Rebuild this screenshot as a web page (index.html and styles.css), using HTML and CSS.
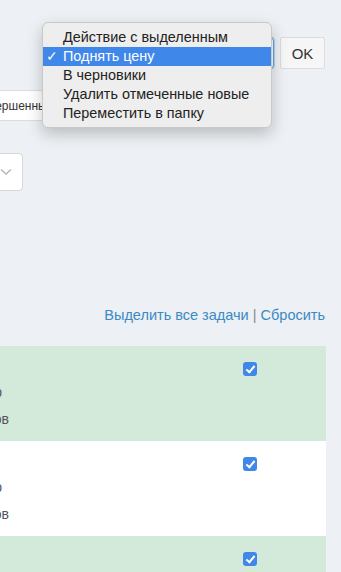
FILE: index.html
```html
<!DOCTYPE html>
<html lang="ru">
<head>
  <meta charset="UTF-8" />
  <meta name="viewport" content="width=device-width, initial-scale=1.0" />
  <title>Мои задачи</title>
  <link rel="stylesheet" href="styles.css">
</head>
<body>

  <div class="actions">
    <div class="action-select"></div>
    <button class="ok-btn">OK</button>

    <!-- Открытый список действий -->
    <div class="action-menu">
      <div class="menu-item">Действие с выделенным</div>
      <div class="menu-item selected"><span class="tick">✓</span>Поднять цену</div>
      <div class="menu-item">В черновики</div>
      <div class="menu-item">Удалить отмеченные новые</div>
      <div class="menu-item">Переместить в папку</div>
    </div>
  </div>

  <div class="tabs">
    <button class="tab-btn">Завершенные</button>
  </div>

  <div class="filter">
    <div class="filter-select">
      <svg class="chevron" width="12" height="8" viewBox="0 0 12 8">
        <path d="M1 1.5 L6 6 L11 1.5" fill="none" stroke="#b5b5b5" stroke-width="1.4" />
      </svg>
    </div>
  </div>

  <div class="select-links">
    <a href="#">Выделить все задачи</a> <span class="sep">|</span> <a href="#">Сбросить</a>
  </div>

  <div class="tasks">
    <div class="task-row green">
      <div class="task-info">
        <div class="task-line">Срок: 3 дня</div>
        <div class="task-line short">Цена: 500 р</div>
        <div class="task-line">12 откликов</div>
      </div>
      <span class="check"></span>
    </div>
    <div class="task-row">
      <div class="task-info">
        <div class="task-line">Срок: 5 дней</div>
        <div class="task-line short">Цена: 800 р</div>
        <div class="task-line">7 откликов</div>
      </div>
      <span class="check"></span>
    </div>
    <div class="task-row green">
      <div class="task-info">
        <div class="task-line">Срок: 2 дня</div>
        <div class="task-line short">Цена: 300 р</div>
        <div class="task-line">4 отклика</div>
      </div>
      <span class="check"></span>
    </div>
  </div>

</body>
</html>
```

FILE: styles.css
```css
:root {
  --bg: #edf0f4;
  --green-row: #d3eadb;
  --link: #3a8ac3;
  --text: #555;
  --border: #dcdcdc;
  --mac-blue: #3f87e8;
}

* {
  box-sizing: border-box;
}

body {
  margin: 0;
  background-color: var(--bg);
  font-family: 'Liberation Sans', Arial, sans-serif;
  color: var(--text);
  overflow: hidden;
  height: 572px;
}

.actions {
  position: relative;
  display: flex;
  justify-content: flex-end;
  gap: 6px;
  padding: 37px 16px 0 0;
}

.action-select {
  width: 230px;
  height: 32px;
  background: #fff;
  border: 1px solid #6aa4dc;
  border-radius: 4px;
  box-shadow: 0 0 0 1px #b4d2f0;
}

.ok-btn {
  width: 45px;
  height: 32px;
  background: #f6f6f6;
  border: 1px solid var(--border);
  border-radius: 2px;
  font-family: inherit;
  font-size: 15px;
  color: #333;
  padding: 0;
}

.action-menu {
  position: absolute;
  top: 22px;
  left: 42px;
  width: 230px;
  padding: 5px 0 4px;
  background: #eeeeee;
  border: 1px solid #c9c9c9;
  border-radius: 6px;
  box-shadow: 0 6px 16px rgba(0, 0, 0, 0.22);
  z-index: 10;
}

.menu-item {
  height: 19px;
  line-height: 19px;
  padding-left: 20px;
  font-size: 14.4px;
  color: #222;
  white-space: nowrap;
}

.menu-item.selected {
  background: var(--mac-blue);
  color: #fff;
  position: relative;
}

.tick {
  position: absolute;
  left: 3px;
  top: 0;
}

.tabs {
  margin-top: 21px;
}

.tab-btn {
  display: block;
  margin-left: -30px;
  width: 74px;
  height: 31px;
  background: #fff;
  border: 1px solid var(--border);
  border-radius: 3px;
  font-family: inherit;
  font-size: 12px;
  color: #333;
  padding: 0 0 0 4px;
  text-align: left;
  white-space: nowrap;
  overflow: hidden;
}

.filter {
  margin-top: 32px;
}

.filter-select {
  margin-left: -60px;
  width: 83px;
  height: 38px;
  background: #fff;
  border: 1px solid #d8d8d8;
  border-radius: 4px;
  display: flex;
  align-items: center;
  justify-content: flex-end;
  padding-right: 10px;
}

.chevron {
  display: block;
}

.select-links {
  margin-top: 114px;
  padding-right: 16px;
  text-align: right;
  font-size: 14.5px;
  line-height: 20px;
}

.select-links a {
  color: var(--link);
  text-decoration: none;
}

.sep {
  color: #888;
}

.tasks {
  margin-top: 21px;
  width: 326px;
}

.task-row {
  height: 95px;
  background: #fff;
  display: flex;
  align-items: flex-start;
  padding-top: 16px;
  overflow: hidden;
}

.task-row.green {
  background: var(--green-row);
}

/* Колонка с описанием уходит за левый край */
.task-info {
  width: 243px;
  margin-top: -10px;
}

.task-line {
  width: 100px;
  margin-left: -91px;
  text-align: right;
  font-size: 14px;
  line-height: 27px;
  white-space: nowrap;
  overflow: hidden;
}

.task-line:first-child {
  visibility: hidden;
}

.task-line.short {
  width: 93px;
}

.check {
  width: 14px;
  height: 14px;
  border-radius: 3px;
  background: var(--mac-blue);
  position: relative;
}

.check::after {
  content: "";
  position: absolute;
  left: 4.5px;
  top: 2px;
  width: 3px;
  height: 7px;
  border: solid #fff;
  border-width: 0 2px 2px 0;
  transform: rotate(40deg);
}
```
